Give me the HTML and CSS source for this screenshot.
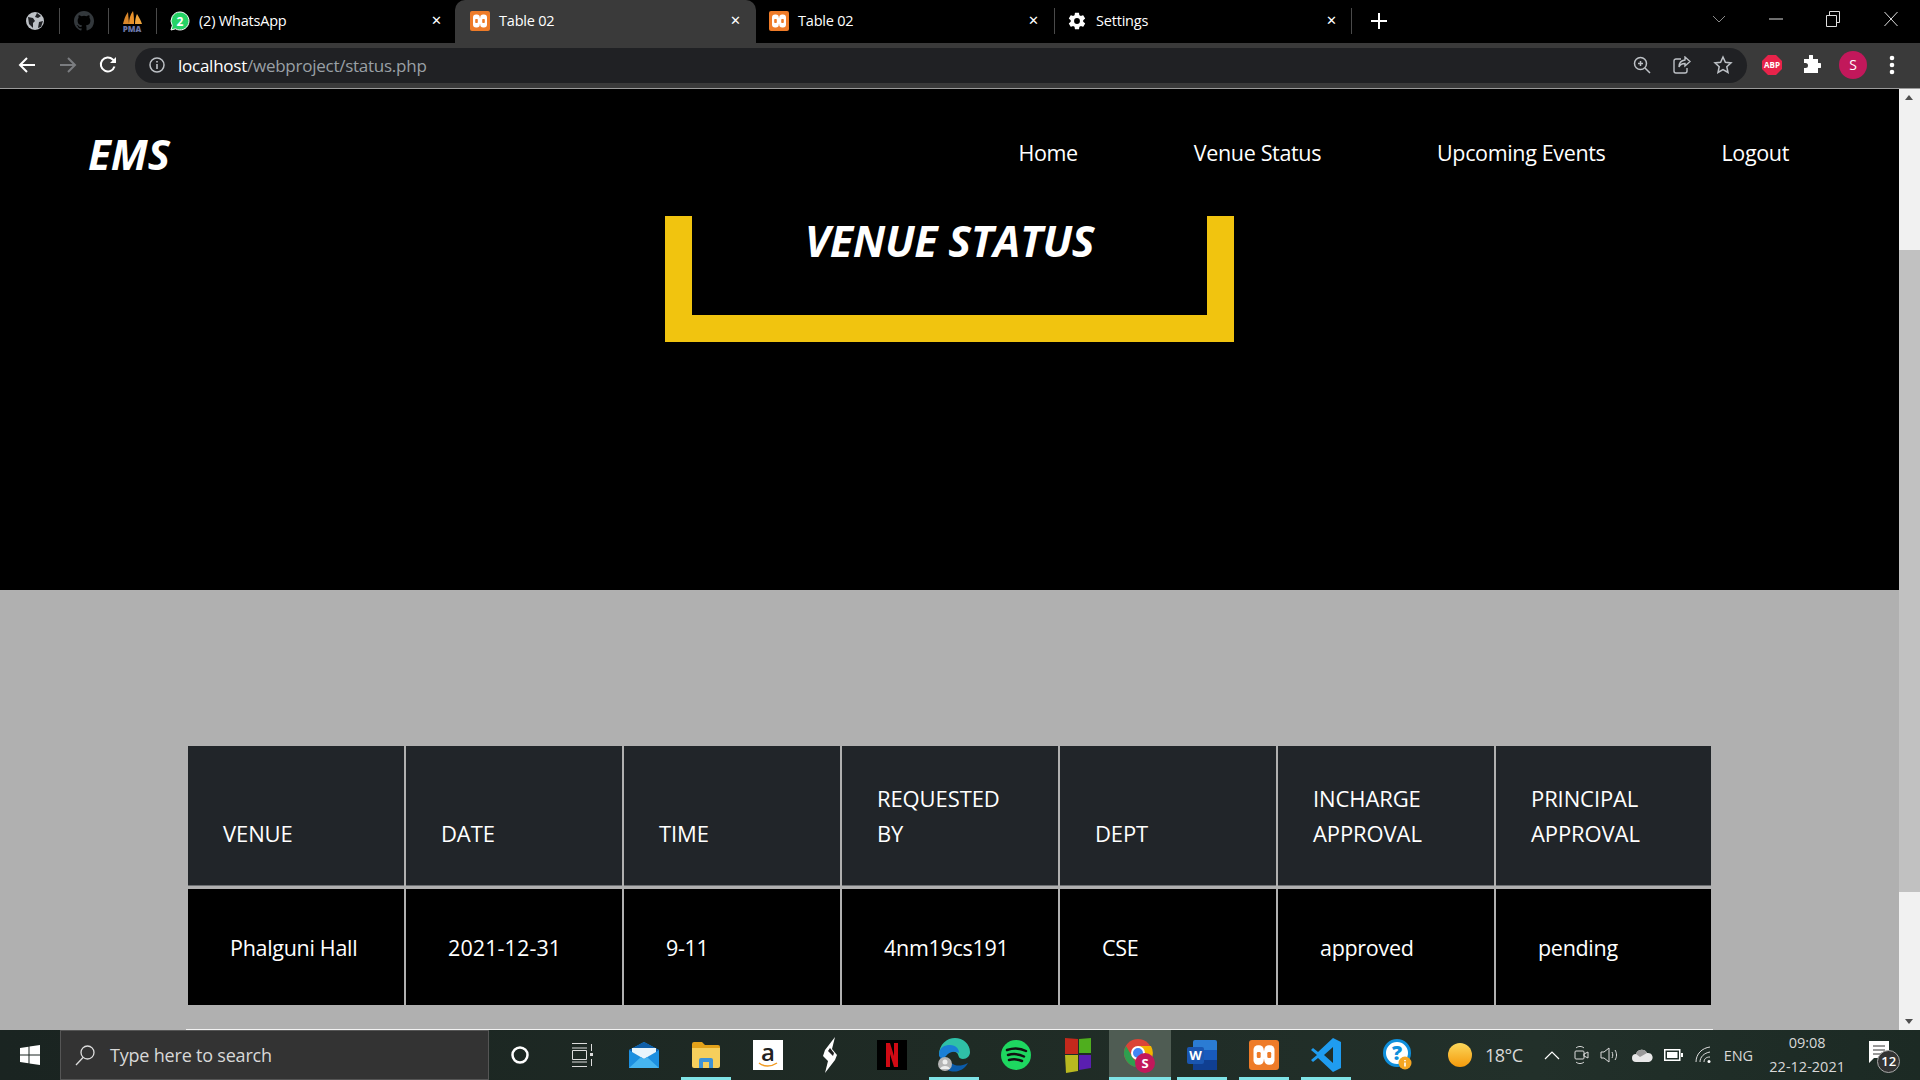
FILE: index.html
```html
<!DOCTYPE html>
<html lang="en">
<head>
  <meta charset="UTF-8" />
  <title>Table 02</title>
  <link rel="stylesheet" href="styles.css">
</head>
<body>
  <svg class="defs" width="0" height="0">
    <symbol id="xampp" viewBox="0 0 20 20">
      <rect width="20" height="20" rx="2" fill="#ee7b28"/>
      <rect x="3" y="3.500" width="6.800" height="13" rx="3" fill="#fff"/>
      <rect x="10.200" y="3.500" width="6.800" height="13" rx="3" fill="#fff"/>
      <rect x="9" y="7" width="2" height="6" fill="#fff"/>
      <rect x="5.200" y="8" width="2.600" height="4" rx=".8" fill="#ee7b28"/>
      <rect x="12.200" y="8" width="2.600" height="4" rx=".8" fill="#ee7b28"/>
    </symbol>
  </svg>

  <header class="tabstrip">
    <div class="pinned">
      <svg width="20" height="20" viewBox="0 0 20 20"><circle cx="10" cy="10" r="9" fill="#bdc1c6"/><path d="M3 6l5 1 2 3-2 2v5L4 13zM12 2l4 3-3 2-3-1zM14 11l4-1-2 6-3 1z" fill="#202124"/></svg>
    </div>
    <div class="pinned">
      <svg width="20" height="20" viewBox="0 0 16 16"><path fill="#33383c" d="M8 0C3.580 0 0 3.580 0 8c0 3.540 2.290 6.530 5.470 7.590.4.070.55-.17.55-.38v-1.340c-2.230.49-2.700-1.070-2.700-1.070-.36-.93-.89-1.170-.89-1.170-.73-.5.050-.49.050-.49.8.060 1.230.83 1.230.83.720 1.220 1.870.87 2.330.66.070-.52.280-.87.510-1.070-1.780-.2-3.640-.89-3.640-3.950 0-.87.310-1.590.820-2.150-.080-.2-.360-1.020.080-2.120 0 0 .670-.21 2.200.82a7.600 7.600 0 0 1 4 0c1.530-1.040 2.200-.82 2.200-.82.440 1.100.160 1.920.080 2.120.510.560.820 1.270.820 2.150 0 3.070-1.870 3.750-3.650 3.950.290.250.540.730.540 1.480v2.200c0 .210.150.460.550.380A8 8 0 0 0 16 8c0-4.420-3.580-8-8-8z"/></svg>
    </div>
    <div class="pinned">
      <svg width="22" height="24" viewBox="0 0 22 24"><path d="M2 15C3 11 4 7 7 3l1 12z" fill="#d9862a"/><path d="M8 15c0-5 1-9 4-13 1 4 1 9 1 13z" fill="#e8912a"/><path d="M14 15c0-4 1-8 2-10 2 3 4 7 5 10z" fill="#f0a53c"/><text x="11" y="22.500" class="pma">PMA</text></svg>
    </div>
    <div class="tab">
      <svg class="tab-icon" width="20" height="20" viewBox="0 0 20 20"><path d="M10 1a9 9 0 0 0-7.700 13.600L1 19l4.500-1.200A9 9 0 1 0 10 1z" fill="#25d366" stroke="#fff" stroke-width="1"/><text x="10" y="14.500" class="wa-count">2</text></svg>
      <span class="tab-title">(2) WhatsApp</span>
      <span class="tab-close">&#x2715;</span>
    </div>
    <div class="tab tab-active">
      <svg class="tab-icon" width="20" height="20"><use href="#xampp"/></svg>
      <span class="tab-title">Table 02</span>
      <span class="tab-close">&#x2715;</span>
    </div>
    <div class="tab tab-sep">
      <svg class="tab-icon" width="20" height="20"><use href="#xampp"/></svg>
      <span class="tab-title">Table 02</span>
      <span class="tab-close">&#x2715;</span>
    </div>
    <div class="tab tab-sep">
      <svg class="tab-icon" width="20" height="20" viewBox="0 0 24 24"><path fill="#fff" d="M19.400 13c.04-.3.060-.7.060-1s-.02-.7-.060-1l2.100-1.600c.2-.15.250-.4.120-.640l-2-3.460c-.12-.22-.4-.3-.6-.22l-2.500 1a7.300 7.300 0 0 0-1.700-1l-.4-2.650A.5.500 0 0 0 14 2h-4a.5.500 0 0 0-.5.420l-.4 2.650c-.6.250-1.200.6-1.700 1l-2.500-1c-.2-.080-.5 0-.6.220l-2 3.460c-.130.220-.070.490.120.640L4.500 11c-.04.300-.070.700-.070 1s.03.700.070 1l-2.100 1.600c-.2.150-.250.420-.120.640l2 3.460c.12.220.4.300.6.220l2.500-1c.5.400 1.100.750 1.700 1l.4 2.650c.03.240.250.420.5.420h4c.250 0 .460-.180.500-.420l.4-2.650c.6-.250 1.200-.6 1.700-1l2.500 1c.2.080.5 0 .6-.220l2-3.460c.120-.220.070-.490-.120-.640zM12 15.500a3.500 3.500 0 1 1 0-7 3.500 3.500 0 0 1 0 7z"/></svg>
      <span class="tab-title">Settings</span>
      <span class="tab-close">&#x2715;</span>
    </div>
    <div class="new-tab">
      <svg width="16" height="16" viewBox="0 0 16 16"><path d="M8 0v16M0 8h16" stroke="#fff" stroke-width="2"/></svg>
    </div>
    <div class="win-controls">
      <svg width="14" height="8" viewBox="0 0 14 8"><path d="M1 1l6 6 6-6" fill="none" stroke="#8a8a8a"/></svg>
      <svg class="win-min" width="14" height="2"><path d="M0 1h14" stroke="#ddd"/></svg>
      <svg class="win-max" width="14" height="16" viewBox="0 0 14 16"><path d="M.5 4.500h10v11H.5zM3.500 4.500V.5h10v11h-3" fill="none" stroke="#ddd"/></svg>
      <svg class="win-close" width="14" height="16" viewBox="0 0 14 16"><path d="M.5 1l13 14M13.500 1L.5 15" stroke="#ddd" fill="none"/></svg>
    </div>
  </header>

  <div class="toolbar">
    <svg class="tool tool-back" width="18" height="18" viewBox="0 0 18 18"><path d="M17 9H2M9 2L2 9l7 7" fill="none" stroke="#fff" stroke-width="2"/></svg>
    <svg class="tool tool-forward" width="18" height="18" viewBox="0 0 18 18"><path d="M1 9h15M9 2l7 7-7 7" fill="none" stroke="#7b7d80" stroke-width="2"/></svg>
    <svg class="tool tool-reload" width="18" height="18" viewBox="0 0 18 18"><path d="M15.500 10.500A7 7 0 1 1 13.800 3.500L16 5.500" fill="none" stroke="#fff" stroke-width="2"/><path d="M17 1v6h-6z" fill="#fff"/></svg>
    <div class="omnibox">
      <svg class="omni-info" width="16" height="16" viewBox="0 0 16 16"><circle cx="8" cy="8" r="7" fill="none" stroke="#bdc1c6" stroke-width="1.500"/><path d="M8 7v5M8 4v1.600" stroke="#bdc1c6" stroke-width="1.600"/></svg>
      <span class="url"><span class="url-host">localhost</span>/webproject/status.php</span>
      <svg class="omni-action" width="18" height="18" viewBox="0 0 18 18"><circle cx="7.500" cy="7.500" r="6" fill="none" stroke="#bdc1c6" stroke-width="1.500"/><path d="M12 12l5 5M7.500 5v5M5 7.500h5" stroke="#bdc1c6" stroke-width="1.500"/></svg>
      <svg class="omni-action" width="18" height="18" viewBox="0 0 18 18"><path d="M8 3H3a2 2 0 0 0-2 2v10a2 2 0 0 0 2 2h9a2 2 0 0 0 2-2v-3" fill="none" stroke="#bdc1c6" stroke-width="1.400"/><path d="M12 1l5 4.500-5 4.500V7.500c-3 0-5 1-6 3.500 0-4 2-6.500 6-7z" fill="none" stroke="#bdc1c6" stroke-width="1.400"/></svg>
      <svg class="omni-action" width="20" height="20" viewBox="0 0 20 20"><path d="M10 2l2.400 5.300 5.600.6-4.200 3.800 1.200 5.800-5-3-5 3 1.200-5.800L2 7.900l5.600-.6z" fill="none" stroke="#bdc1c6" stroke-width="1.500"/></svg>
    </div>
    <div class="extensions">
      <svg width="20" height="20" viewBox="0 0 20 20"><path d="M6 0h8l6 6v8l-6 6H6l-6-6V6z" fill="#e8234a"/><text x="10" y="13" class="abp">ABP</text></svg>
      <svg width="20" height="20" viewBox="0 0 20 20"><path fill="#fff" d="M8 1a2 2 0 0 1 4 0v3h5v4h1.500a2.500 2.500 0 0 1 0 5H17v5H3v-5h1.500a2.500 2.500 0 0 0 0-5H3V4h5z"/></svg>
      <span class="avatar">S</span>
      <svg width="6" height="20" viewBox="0 0 6 20"><circle cx="3" cy="3" r="2.300" fill="#fff"/><circle cx="3" cy="10" r="2.300" fill="#fff"/><circle cx="3" cy="17" r="2.300" fill="#fff"/></svg>
    </div>
  </div>

  <div class="viewport">
    <main class="page">
      <section class="hero">
        <nav class="navbar">
          <a class="brand">EMS</a>
          <ul class="nav-links">
            <li>Home</li>
            <li>Venue Status</li>
            <li>Upcoming Events</li>
            <li>Logout</li>
          </ul>
        </nav>
        <div class="title-box">
          <h1>VENUE STATUS</h1>
        </div>
      </section>
      <section class="status">
        <table class="status-table">
          <thead>
            <tr>
              <th>VENUE</th>
              <th>DATE</th>
              <th>TIME</th>
              <th>REQUESTED BY</th>
              <th>DEPT</th>
              <th>INCHARGE APPROVAL</th>
              <th>PRINCIPAL APPROVAL</th>
            </tr>
          </thead>
          <tbody>
            <tr>
              <td>Phalguni Hall</td>
              <td class="cell-date">2021-12-31</td>
              <td>9-11</td>
              <td>4nm19cs191</td>
              <td>CSE</td>
              <td>approved</td>
              <td>pending</td>
            </tr>
          </tbody>
        </table>
        <div class="table-rule"></div>
      </section>
    </main>
    <div class="scrollbar">
      <span class="arrow arrow-up"></span>
      <div class="track"><div class="thumb"></div></div>
      <span class="arrow arrow-down"></span>
    </div>
  </div>

  <footer class="taskbar">
    <div class="start">
      <svg width="20" height="20" viewBox="0 0 20 20"><path fill="#fff" d="M0 3l8.500-1.200V9.500H0zM9.500 1.600L20 0v9.500H9.500zM0 10.500h8.500v7.700L0 17zM9.500 10.500H20V20L9.500 18.400z"/></svg>
    </div>
    <div class="search">
      <svg width="22" height="22" viewBox="0 0 22 22"><circle cx="13.500" cy="8.500" r="6.500" fill="none" stroke="#ddd" stroke-width="1.300"/><path d="M9 13.500L2 21" stroke="#ddd" stroke-width="1.300"/></svg>
      <span>Type here to search</span>
    </div>
    <div class="apps">
      <div class="app"><svg width="18" height="18" viewBox="0 0 18 18"><circle cx="9" cy="9" r="7.500" fill="none" stroke="#fff" stroke-width="2.500"/></svg></div>
      <div class="app"><svg width="22" height="24" viewBox="0 0 22 24"><path d="M1 .5h15M1 23.500h15M1.500 7.500h14v9h-14zM1 5h15M1 19h15" fill="none" stroke="#ddd"/><path d="M20.500 1v7M20.500 16v7" stroke="#ddd"/><rect x="19" y="10" width="3" height="3" fill="#ddd"/></svg></div>
      <div class="app"><svg width="30" height="26" viewBox="0 0 30 26"><path d="M0 8l15-8 15 8v18H0z" fill="#1c8fe0"/><path d="M0 8l15 9 15-9-15-8z" fill="#0f5ea8"/><path d="M3 6h24v4l-12 7-12-7z" fill="#e9f5fc"/><path d="M0 26l12-11 3 2 3-2 12 11z" fill="#46b5f0"/></svg></div>
      <div class="app app-open"><svg width="28" height="26" viewBox="0 0 28 26"><path d="M0 2a2 2 0 0 1 2-2h8l3 3h13a2 2 0 0 1 2 2v4H0z" fill="#e3a21a"/><path d="M0 6h28v18a2 2 0 0 1-2 2H2a2 2 0 0 1-2-2z" fill="#f6cf5c"/><path d="M7 26v-8a2 2 0 0 1 2-2h10a2 2 0 0 1 2 2v8h-4v-6h-6v6z" fill="#3e93d6"/></svg></div>
      <div class="app"><div class="amazon"><span>a</span><svg width="20" height="6" viewBox="0 0 20 6"><path d="M1 1c5 4 12 4 18 0" fill="none" stroke="#f29a1f" stroke-width="1.500"/></svg></div></div>
      <div class="app"><svg width="14" height="36" viewBox="0 0 14 36"><path d="M12 0L2 13l-2 6 5 5-3 12 10-13 2-5-5-6z" fill="#fff"/><path d="M7 11l4 5-1 3-5-5z" fill="#222"/></svg></div>
      <div class="app"><div class="netflix"><svg width="12" height="24" viewBox="0 0 12 24"><path fill="#d00a14" d="M0 0h4l4 13V0h4v24H8L4 11v13H0z"/></svg></div></div>
      <div class="app app-open">
        <svg width="32" height="36" viewBox="0 0 32 36"><path d="M1 18C1 7 9 1 17 1c8 0 15 6 15 14 0 4-3 7-7 7-5 0-4-4-6-6-3-3-9-2-12 1-3 3-5 3-6 1z" fill="#2fc0a7"/><path d="M1 18C1 10 7 8 12 8c6 0 9 4 9 8-4-2-9-2-13 3-3 4-7 2-7-1z" fill="#1a7fd6"/><path d="M12 34c-6-2-10-8-10-14 3 2 6 1 8 3 3 3 8 9 20 3-4 7-11 10-18 8z" fill="#0b5cab"/><circle cx="7" cy="27" r="7" fill="#b5b5b5"/><circle cx="7" cy="25" r="2.500" fill="#eee"/><path d="M2 32c1-4 9-4 10 0z" fill="#eee"/></svg>
      </div>
      <div class="app"><svg width="30" height="30" viewBox="0 0 30 30"><circle cx="15" cy="15" r="15" fill="#1ed760"/><path d="M6 10c6-2 13-2 19 1M7 15c5-1.500 11-1 16 1.500M8 20c4-1 9-.8 13 1" fill="none" stroke="#111" stroke-width="2.500" stroke-linecap="round"/></svg></div>
      <div class="app"><svg width="28" height="36" viewBox="0 0 28 36"><path d="M1 1l13 1v15H1z" fill="#c4291c"/><path d="M15 2l12-1v15H15z" fill="#4fae1e"/><path d="M1 18h13v16L2 36z" fill="#b9b920"/><path d="M15 18h12v13l-12 2z" fill="#5a1fb0"/></svg></div>
      <div class="app app-active app-open"><svg width="32" height="36" viewBox="0 0 32 36"><circle cx="14" cy="16" r="14" fill="#db4437"/><path d="M2 9l7 12 6 9a14 14 0 0 1-13-21z" fill="#2e9e4f"/><path d="M14 9h13a14 14 0 0 1-12 21l6-12z" fill="#f4b400"/><circle cx="14" cy="16" r="6" fill="#4285f4" stroke="#fff" stroke-width="2"/><circle cx="21" cy="26" r="10" fill="#c2185b"/><text x="21" y="30.500" class="chrome-s">S</text></svg></div>
      <div class="app app-open"><svg width="30" height="30" viewBox="0 0 30 30"><rect x="6" width="24" height="30" rx="2" fill="#2b7cd3"/><rect x="6" y="10" width="24" height="10" fill="#185abd"/><rect x="6" y="20" width="24" height="10" fill="#103f91"/><rect y="7" width="17" height="17" rx="2" fill="#1a56b0"/><text x="8.500" y="20" class="word-w">W</text></svg></div>
      <div class="app app-open"><svg width="30" height="36"><use href="#xampp"/></svg></div>
      <div class="app app-open"><svg width="30" height="36" viewBox="0 0 30 36"><path d="M22 1l8 4v26l-8 4L7 21l-5 4-2-2 6-5-6-5 2-2 5 4zM22 10l-9 8 9 8z" fill="#1f9cf0"/></svg></div>
    </div>
    <div class="tray">
      <svg class="tray-help" width="30" height="32" viewBox="0 0 30 32"><circle cx="14" cy="14" r="12.500" fill="#fff" stroke="#0f8fdc" stroke-width="3"/><text x="14" y="21" class="help-q">?</text><circle cx="22" cy="24" r="6.500" fill="#f5a623"/><path d="M22 21v1.200M22 23.500v4" stroke="#fff" stroke-width="1.600"/></svg>
      <svg class="tray-sun" width="24" height="24" viewBox="0 0 24 24"><defs><linearGradient id="sun" x1="0" y1="0" x2="0" y2="1"><stop offset="0" stop-color="#fbd75b"/><stop offset="1" stop-color="#f59a0b"/></linearGradient></defs><circle cx="12" cy="12" r="12" fill="url(#sun)"/></svg>
      <span class="tray-temp">18°C</span>
      <svg class="tray-chevron" width="16" height="9" viewBox="0 0 16 9"><path d="M1 8l7-7 7 7" fill="none" stroke="#fff" stroke-width="1.200"/></svg>
      <svg class="tray-meet" width="15" height="20" viewBox="0 0 15 20"><rect x="1" y="6" width="9" height="8" rx="1" fill="none" stroke="#ddd"/><path d="M10 9l4-2v6l-4-2zM2 3c2-2 6-2 8 0M2 17c2 2 6 2 8 0" fill="none" stroke="#ddd"/></svg>
      <svg class="tray-volume" width="20" height="18" viewBox="0 0 20 18"><path d="M1 6h3l5-4v14l-5-4H1z" fill="none" stroke="#ddd"/><path d="M12 6c1 2 1 4 0 6M15 4c2 3 2 7 0 10" fill="none" stroke="#ddd"/></svg>
      <svg class="tray-cloud" width="21" height="14" viewBox="0 0 21 14"><path d="M4 14a4 4 0 0 1 0-8 6 6 0 0 1 11-1 4.500 4.500 0 0 1 2 9z" fill="#e8e8e8"/><path d="M4 6a6 6 0 0 1 11-1L8 9z" fill="#9a9a9a"/></svg>
      <svg class="tray-battery" width="19" height="12" viewBox="0 0 19 12"><rect x=".75" y=".75" width="15" height="10.500" fill="none" stroke="#fff" stroke-width="1.500"/><rect x="3" y="3" width="10.500" height="6" fill="#fff"/><rect x="17" y="4" width="2" height="4" fill="#fff"/></svg>
      <svg class="tray-wifi" width="16" height="18" viewBox="0 0 16 18"><path d="M1 16C1 8 7 2 15 1M5 16c0-5 4-9 10-10M9 16c0-3 2-5 6-5" fill="none" stroke="#ddd"/><circle cx="14" cy="15.500" r="1.500" fill="#fff"/></svg>
      <span class="tray-lang">ENG</span>
      <div class="clock"><span>09:08</span><span>22-12-2021</span></div>
      <div class="notify">
        <svg width="20" height="22" viewBox="0 0 20 22"><path d="M0 0h20v17H5l-5 5z" fill="#fff"/><path d="M4 5h12M4 9h12M4 13h8" stroke="#333"/></svg>
        <span class="notify-count">12</span>
      </div>
    </div>
  </footer>
</body>
</html>
```

FILE: styles.css
```css
* {
  box-sizing: border-box;
}
html, body {
  margin: 0;
  height: 100%;
}
body {
  display: flex;
  flex-direction: column;
  width: 1920px;
  height: 1080px;
  overflow: hidden;
  background: #000;
  font-family: "Open Sans", "Noto Sans", Arial, sans-serif;
  color: #fff;
}
.defs {
  position: absolute;
}

/* browser tabs */
.tabstrip {
  display: flex;
  align-items: center;
  height: 43px;
  flex: none;
  background: #000;
  font-size: 14.500px;
}
.pinned {
  display: flex;
  align-items: center;
  justify-content: center;
  width: 48.500px;
  height: 26px;
  margin-bottom: 2px;
  border-right: 1px solid #4a4a4a;
}
.pinned:first-child {
  width: 60px;
  padding-left: 11px;
}
.pma {
  fill: #6b76a8;
  font-size: 8px;
  font-weight: 800;
  text-anchor: middle;
}
.tab {
  display: flex;
  align-items: center;
  width: 298px;
  height: 43px;
  padding: 0 15px 2px 13px;
  position: relative;
}
.pinned + .tab {
  padding-right: 13px;
}
.tab-active {
  background: #3a3a3a;
  border-radius: 10px 10px 0 0;
  width: 301px;
  padding-left: 15px;
}
.tab-icon {
  flex: none;
}
.tab-title {
  margin-left: 9px;
  flex: 1;
  letter-spacing: -0.2px;
}
.tab-close {
  font-size: 13px;
  font-weight: bold;
  font-family: "DejaVu Sans", sans-serif;
}
.tab-sep + .tab-sep::before,
.tab-sep + .tab-sep::after {
  content: "";
  position: absolute;
  top: 8px;
  width: 1px;
  height: 26px;
  background: #4a4a4a;
}
.tab-sep + .tab-sep::before {
  left: 0;
}
.tab-sep + .tab-sep::after {
  right: 0;
}
.wa-count {
  fill: #fff;
  font-size: 12px;
  font-weight: bold;
  text-anchor: middle;
}
.new-tab {
  display: flex;
  margin-left: 19px;
  margin-bottom: 2px;
}
.win-controls {
  margin-left: auto;
  display: flex;
  align-items: center;
  padding: 0 22px 6px 0;
}
.win-min {
  margin-left: 43px;
}
.win-max {
  margin-left: 43px;
}
.win-close {
  margin-left: 44px;
}

/* address bar */
.toolbar {
  display: flex;
  align-items: center;
  height: 46px;
  flex: none;
  background: #3a3a3a;
  border-bottom: 1px solid #9a9a9a;
  padding-bottom: 1px;
}
.tool {
  flex: none;
}
.tool-back {
  margin-left: 18px;
}
.tool-forward {
  margin-left: 23px;
}
.tool-reload {
  margin-left: 22px;
}
.omnibox {
  display: flex;
  align-items: center;
  width: 1612px;
  height: 35px;
  margin-left: 18px;
  padding-left: 14px;
  padding-right: 14px;
  background: #202124;
  border-radius: 18px;
}
.url {
  margin-left: 13px;
  margin-right: auto;
  font-size: 17px;
  letter-spacing: -0.25px;
  color: #9aa0a6;
}
.url-host {
  color: #fff;
}
.omni-action {
  margin-left: 22px;
}
.extensions {
  display: flex;
  align-items: center;
  margin-left: 15px;
}
.extensions svg + svg {
  margin-left: 19px;
}
.abp {
  fill: #fff;
  font-size: 8px;
  font-weight: bold;
  text-anchor: middle;
}
.avatar {
  width: 28px;
  height: 28px;
  margin-left: 18px;
  margin-right: 22px;
  border-radius: 50%;
  background: #c2185b;
  text-align: center;
  font-size: 14px;
  line-height: 28px;
}

/* page */
.viewport {
  display: flex;
  height: 941px;
  flex: none;
}
.page {
  width: 1899px;
  flex: none;
}
.hero {
  height: 501px;
  background: #000;
}
.navbar {
  display: flex;
  align-items: center;
  justify-content: space-between;
  height: 127px;
  padding: 0 110px 0 88px;
}
.brand {
  margin-top: 2px;
  font-size: 42px;
  font-weight: 700;
  font-style: italic;
}
.nav-links {
  display: flex;
  gap: 116px;
  margin: 0;
  padding: 0;
  list-style: none;
  font-size: 21.500px;
  letter-spacing: -0.35px;
}
.title-box {
  width: 569px;
  height: 126px;
  margin-left: 665px;
  border: 27px solid #f1c40f;
  border-top: 0;
  text-align: center;
}
.title-box h1 {
  margin: 0;
  font-size: 43px;
  line-height: 50px;
  font-weight: 700;
  font-style: italic;
  letter-spacing: -0.3px;
}
.status {
  height: 440px;
  padding: 156px 188px 0;
  background: #b0b0b0;
}
.status-table {
  width: 1523px;
  table-layout: fixed;
  border-collapse: separate;
  border-spacing: 0;
  font-size: 21.500px;
  letter-spacing: -0.3px;
}
.status-table th {
  width: 218px;
  height: 143px;
  padding: 0 36px 35px 35px;
  background: #212529;
  border-bottom: 3px solid #b0b0b0;
  box-shadow: inset 0 -1px 0 #6c6f72;
  text-align: left;
  vertical-align: bottom;
  font-size: 22px;
  font-weight: 400;
  line-height: 35px;
  letter-spacing: -0.1px;
}
.status-table th:last-child {
  width: 215px;
}
.status-table td {
  height: 116px;
  padding: 0 42px;
  background: #000;
  line-height: 35px;
}
.status-table .cell-date {
  letter-spacing: 0.1px;
}
.status-table th:not(:last-child),
.status-table td:not(:last-child) {
  border-right: 2px solid #b0b0b0;
}
.table-rule {
  width: 1527px;
  height: 1px;
  margin: 24px 0 0 -2px;
  background: #f2f2f2;
}

/* scrollbar */
.scrollbar {
  display: flex;
  flex-direction: column;
  width: 21px;
  background: #f1f1f1;
}
.arrow {
  display: block;
  height: 17px;
  flex: none;
  position: relative;
}
.arrow::before {
  content: "";
  position: absolute;
  left: 6px;
  top: 6px;
  border-left: 4.500px solid transparent;
  border-right: 4.500px solid transparent;
}
.arrow-up::before {
  border-bottom: 5px solid #505050;
}
.arrow-down::before {
  border-top: 5px solid #505050;
}
.track {
  flex: 1;
  padding-top: 144px;
}
.thumb {
  height: 642px;
  background: #c1c1c1;
}

/* windows taskbar */
.taskbar {
  display: flex;
  align-items: center;
  height: 50px;
  flex: none;
  background: linear-gradient(90deg, #1a2421, #1f2b25 50%, #22302a 80%, #1c2a24);
  font-size: 18px;
  color: #d8d8d8;
}
.start {
  display: flex;
  justify-content: center;
  width: 60px;
}
.search {
  display: flex;
  align-items: center;
  gap: 14px;
  width: 429px;
  height: 50px;
  padding-left: 13px;
  background: #333;
  border: 1px solid #555;
  letter-spacing: -0.2px;
}
.apps {
  display: flex;
  height: 50px;
}
.app {
  display: flex;
  align-items: center;
  justify-content: center;
  position: relative;
  width: 62px;
  height: 50px;
}
.app-open::after {
  content: "";
  position: absolute;
  left: 6px;
  right: 6px;
  bottom: 0;
  height: 3px;
  background: #7fe3e6;
}
.app-active {
  background: #4f5c53;
}
.app-active::after {
  left: 0;
  right: 0;
}
.amazon {
  display: flex;
  flex-direction: column;
  align-items: center;
  width: 30px;
  height: 30px;
  background: #fff;
  color: #222;
  font-size: 24px;
  font-weight: 600;
  line-height: 24px;
}
.amazon svg {
  margin-top: -2px;
}
.netflix {
  display: flex;
  align-items: center;
  justify-content: center;
  width: 30px;
  height: 30px;
  background: #000;
}
.chrome-s {
  fill: #fff;
  font-size: 13px;
  font-weight: 700;
  text-anchor: middle;
}
.word-w {
  fill: #fff;
  font-size: 13px;
  font-weight: 700;
  text-anchor: middle;
}
.tray {
  display: flex;
  align-items: center;
  flex: 1;
  height: 50px;
  position: relative;
}
.tray-help {
  margin-left: 26px;
}
.help-q {
  fill: #0f8fdc;
  font-size: 20px;
  font-weight: 800;
  text-anchor: middle;
}
.tray-sun {
  margin-left: 35px;
}
.tray-temp {
  margin-left: 13px;
  letter-spacing: -0.5px;
  font-size: 18px;
}
.tray-chevron {
  margin-left: 21px;
}
.tray-meet {
  margin-left: 14px;
}
.tray-volume {
  margin-left: 11px;
}
.tray-cloud {
  margin-left: 12px;
}
.tray-battery {
  margin-left: 11px;
}
.tray-wifi {
  margin-left: 12px;
}
.tray-lang {
  margin-left: 13px;
  font-size: 14.500px;
}
.clock {
  display: flex;
  flex-direction: column;
  align-items: center;
  width: 90px;
  margin-left: 9px;
  font-size: 14.500px;
  line-height: 24px;
}
.notify {
  margin-left: 17px;
  position: relative;
  height: 28px;
}
.notify-count {
  position: absolute;
  left: 8px;
  top: 9px;
  width: 23px;
  height: 23px;
  border-radius: 50%;
  background: #333;
  border: 1px solid #aaa;
  color: #fff;
  font-size: 13px;
  font-weight: 600;
  line-height: 21px;
  text-align: center;
}
```
